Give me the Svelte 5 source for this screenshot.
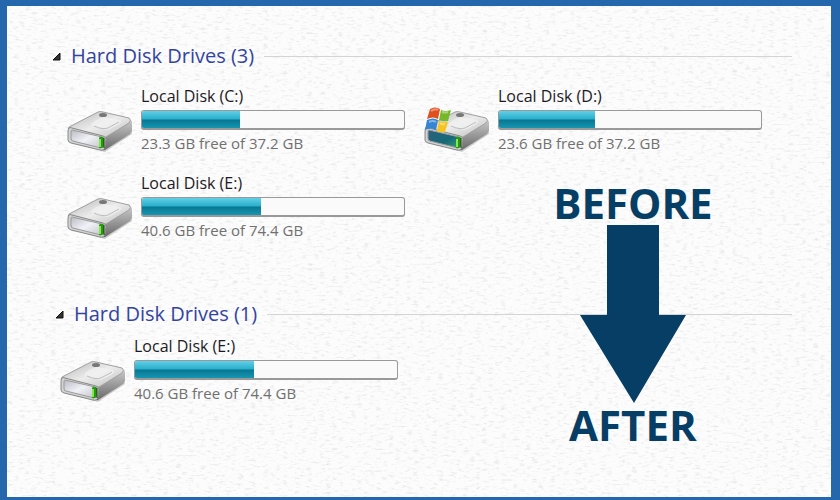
<script>
  let groups = $state([
    {
      id: 'before',
      open: true,
      disks: [
        { letter: 'C', free: 23.3, total: 37.2 },
        { letter: 'D', free: 23.6, total: 37.2, system: true },
        { letter: 'E', free: 40.6, total: 74.4 }
      ]
    },
    {
      id: 'after',
      open: true,
      disks: [{ letter: 'E', free: 40.6, total: 74.4 }]
    }
  ]);

  function usedPercent(disk) {
    return ((disk.total - disk.free) / disk.total) * 100;
  }
</script>

{#snippet driveIcon(system)}
  <svg class="drive-icon" viewBox="0 0 66 48" aria-hidden="true">
    <defs>
      <linearGradient id="top" x1="0" y1="0" x2="1" y2="1">
        <stop offset="0" stop-color="#b4b4b4" />
        <stop offset="0.5" stop-color="#ececec" />
        <stop offset="1" stop-color="#bdbdbd" />
      </linearGradient>
      <linearGradient id="side" x1="0" y1="0" x2="0" y2="1">
        <stop offset="0" stop-color="#c9c9c9" />
        <stop offset="1" stop-color="#686868" />
      </linearGradient>
      <linearGradient id="front" x1="0" y1="0" x2="1" y2="1">
        <stop offset="0" stop-color="#b9bbc2" />
        <stop offset="0.5" stop-color="#f1f2f8" />
        <stop offset="1" stop-color="#c4c5cc" />
      </linearGradient>
      <linearGradient id="front-system" x1="0" y1="0" x2="1" y2="1">
        <stop offset="0" stop-color="#2f5f7c" />
        <stop offset="0.6" stop-color="#156a78" />
        <stop offset="1" stop-color="#36a06c" />
      </linearGradient>
    </defs>
    <path d="M3 37 38 47 65 29 64 24 36 42Z" fill="#000" opacity="0.18" />
    <path d="M36 32 63 15Q65 15 65 18V26L63 29 38 45Q35 46 34 44Z" fill="url(#side)" />
    <path d="M2 22 31 7Q33 6 36 7L62 13Q65 15 62 18L39 32 34 33 3 26Q0 24 2 22Z" fill="url(#top)" stroke="#a0a0a0" />
    <path d="M24 20Q26 15 37 12L53 15Q56 17 51 20L41 25Q31 24 24 20Z" fill="#f2f2f2" opacity="0.7" />
    <path d="M27 21Q36 25 41 23L52 17" fill="none" stroke="#bdbdbd" />
    <ellipse cx="36" cy="10" rx="4" ry="2" fill="#777" />
    <path d="M2 23Q1 24 1 27V35Q1 37 4 38L33 45Q37 46 38 42L39 34Q39 32 36 31L5 23Q3 22 2 23Z" fill="#d2d2d2" stroke="#888" />
    <path d="M5 25 35 32 34 43 6 36Q4 36 4 33V27Q4 25 5 25Z" fill={system ? 'url(#front-system)' : 'url(#front)'} stroke="#9b9b9b" />
    <path d="M32 33Q33 31 36 32L37 33V41Q36 44 32 43Z" fill="#249a12" />
    <path d="M33 34V42" stroke="#83e84b" stroke-width="2" />
    <path d="M37 33V43" stroke="#243020" />
    {#if system}
      <path d="M6 4Q11 1 16 4L14 14Q9 11 3 14Z" fill="#e0501f" />
      <path d="M17 5Q21 7 27 5L24 16Q19 17 15 15Z" fill="#76b82a" />
      <path d="M3 15Q9 12 14 15L12 25Q7 22 1 25Z" fill="#3585d2" />
      <path d="M15 16Q19 18 24 17L21 27Q17 28 13 26Z" fill="#f6c421" />
      <path d="M7 6Q11 3 14 5M18 7Q21 8 24 7M5 17Q9 15 12 17M16 18Q18 20 21 19" fill="none" stroke="#fff" stroke-width="2" opacity="0.4" />
    {/if}
  </svg>
{/snippet}

<main class="page">
  <svg class="paper" aria-hidden="true">
    <filter id="grain" x="0" y="0" width="100%" height="100%">
      <feTurbulence type="fractalNoise" baseFrequency="0.16 0.45" numOctaves="3" seed="4" />
      <feColorMatrix values="0 0 0 0 0.4  0 0 0 0 0.4  0 0 0 0 0.4  0.7 0 0 0 -0.37" />
    </filter>
    <rect width="100%" height="100%" filter="url(#grain)" />
  </svg>

  {#each groups as group (group.id)}
    <section class="group {group.id}">
      <h2>
        <button class="toggle" aria-expanded={group.open} onclick={() => (group.open = !group.open)}>
          <svg class="arrow" class:closed={!group.open} viewBox="0 0 9 9" aria-hidden="true">
            <path d="M8 1V8H1Z" fill="#333" stroke="#111" />
          </svg>
          Hard Disk Drives ({group.disks.length})
        </button>
      </h2>
      {#if group.open}
        <ul class="disks">
          {#each group.disks as disk (disk.letter)}
            <li class="disk">
              {@render driveIcon(disk.system)}
              <div class="info">
                <div class="name">Local Disk ({disk.letter}:)</div>
                <div
                  class="bar"
                  role="meter"
                  aria-label="Used space on {disk.letter}:"
                  aria-valuemin="0"
                  aria-valuemax="100"
                  aria-valuenow={Math.round(usedPercent(disk))}
                >
                  <div class="used" style="width: {usedPercent(disk)}%"></div>
                </div>
                <div class="free">{disk.free} GB free of {disk.total} GB</div>
              </div>
            </li>
          {/each}
        </ul>
      {/if}
    </section>
  {/each}

  <div class="change">
    <strong>BEFORE</strong>
    <svg class="down" viewBox="0 0 106 178" aria-hidden="true">
      <path d="M27 0H79V90H106L54 178 0 90H27Z" fill="#073e66" />
    </svg>
    <strong>AFTER</strong>
  </div>
</main>

<style>
  :global(body) {
    margin: 0;
    background: #2467ad;
  }

  .page {
    position: relative;
    box-sizing: border-box;
    min-height: 100vh;
    padding: 36px 39px 50px 45px;
    border: solid #2467ad;
    border-width: 6px 9px 3px 7px;
    background: #fcfcfc;
    font-family: 'Open Sans', 'Noto Sans', sans-serif;
    display: grid;
    grid-template-columns: 57% 1fr;
    grid-template-rows: auto 1fr;
    row-gap: 57px;
  }

  .paper {
    position: absolute;
    inset: 0;
    width: 100%;
    height: 100%;
  }

  .group {
    position: relative;
    grid-column: 1 / -1;
  }

  .before {
    grid-row: 1;
  }

  .after {
    grid-row: 2;
  }

  h2 {
    display: flex;
    align-items: center;
    gap: 10px;
    margin: 0;
  }

  h2::after {
    content: '';
    flex: 1;
    height: 1px;
    background: #d4d4d4;
  }

  .toggle {
    display: flex;
    align-items: center;
    gap: 10px;
    padding: 0;
    border: none;
    background: none;
    color: #3244a0;
    font: 400 20px/28px 'Open Sans', 'Noto Sans', sans-serif;
    white-space: nowrap;
    cursor: pointer;
  }

  .after .toggle {
    padding-left: 3px;
  }

  .arrow {
    width: 9px;
    height: 9px;
  }

  .arrow.closed {
    transform: rotate(-45deg);
  }

  .disks {
    display: grid;
    grid-template-columns: 1fr 1fr;
    gap: 13px 19px;
    margin: 0;
    padding: 12px 30px 0 15px;
    list-style: none;
  }

  .after .disks {
    padding: 4px 37px 0 8px;
  }

  .disk {
    display: flex;
    align-items: center;
    gap: 8px;
  }

  .drive-icon {
    flex: none;
    width: 66px;
    height: 48px;
    padding-top: 20px;
  }

  .info {
    flex: 1;
    min-width: 0;
  }

  .name {
    color: #1c1a24;
    font-size: 16px;
    line-height: 28px;
    white-space: nowrap;
  }

  .free {
    color: #707070;
    font-size: 15px;
    line-height: 26px;
    white-space: nowrap;
  }

  .bar {
    box-sizing: border-box;
    height: 20px;
    border: 1px solid #999;
    border-bottom-width: 2px;
    border-radius: 3px;
    background: #fafafa;
    overflow: hidden;
  }

  .used {
    height: 100%;
    background: linear-gradient(#62cfe6, #28aecb 48%, #087692 52%, #1696b2);
  }

  .change {
    position: relative;
    grid-column: 2;
    grid-row: 1 / 3;
    justify-self: center;
    align-self: end;
    display: flex;
    flex-direction: column;
    align-items: center;
    color: #073e66;
    pointer-events: none;
  }

  .change strong {
    font: 700 42px/44px 'Open Sans', 'Noto Sans', sans-serif;
  }

  .down {
    width: 106px;
    height: 178px;
  }
</style>
